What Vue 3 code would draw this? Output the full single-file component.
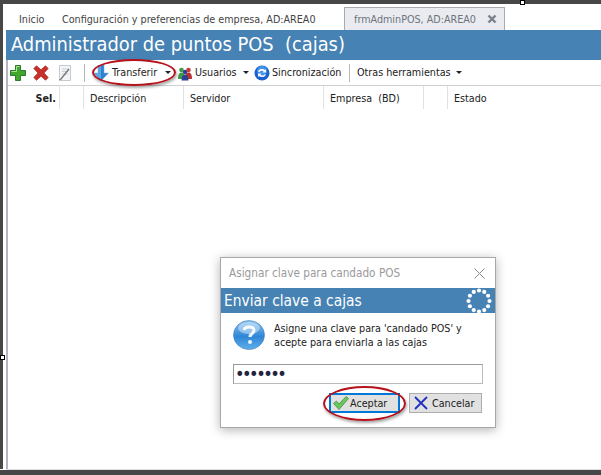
<template>
  <div class="screen">
    <div class="top-bar"><span class="handle handle-top"></span></div>
    <div class="middle">
      <div class="left-bar"><span class="handle handle-left"></span></div>
      <div class="work">
        <div class="tabs">
          <span class="tab tab-first">Inicio</span>
          <span class="tab tab-second">Configuración y preferencias de empresa, AD:AREA0</span>
          <span class="tab-active">
            <span>frmAdminPOS, AD:AREA0</span>
            <svg class="tab-close" viewBox="0 0 10 10"><path d="M1.500 1.500l7 7M8.500 1.500l-7 7" stroke="#7b7f88" stroke-width="2.400" fill="none"/></svg>
          </span>
        </div>
        <div class="band">Administrador de puntos POS&nbsp; (cajas)</div>
        <div class="toolbar">
          <svg class="ico plus" viewBox="0 0 16 16"><path d="M5.500 .5h5v5H15.500v5h-5v5h-5v-5H.5v-5h5z" fill="#43a62f" stroke="#2a7a2a"/><path d="M6.500 6.500V1.500h3M1.500 6.500h5" stroke="#a6e58e" fill="none"/></svg>
          <svg class="ico cross" viewBox="0 0 16 16"><path d="M.8 3.500L3.500 .8 8 4.800 12.500 .8l2.700 2.700L11 8l4.200 4.500-2.700 2.700L8 11.200 3.500 15.200.8 12.500 5 8z" fill="#c9302a" stroke="#a3241f" stroke-width=".7"/></svg>
          <svg class="ico note" viewBox="0 0 16 16"><path d="M2.500 .5h11v15h-11z" fill="#f2f4f6" stroke="#c6cbd1"/><path d="M5 4h6M5 6.500h6M5 9h6" stroke="#c9ced6"/><path d="M12 4L4 14l-1.500 1" stroke="#777" stroke-width="1.400" fill="none"/></svg>
          <span class="sep sep-a"></span>
          <svg class="ico arrow" viewBox="0 0 16 16"><path d="M5 0h6v8h4.500L8 16 .5 8H5z" fill="#2f82cf" stroke="#7eaed6" stroke-width=".5"/><path d="M5 0h3v16L.5 8H5z" fill="#5aa5e4"/></svg>
          <span class="tool t-transfer">Transferir</span>
          <span class="caret c-transfer"></span>
          <svg class="ico users" viewBox="0 0 16 16"><circle cx="4.500" cy="5" r="2.300" fill="#3d9a45"/><path d="M1 14c0-5 1.500-6.500 3.500-6.500S8 9 8 14z" fill="#3d9a45"/><circle cx="11.500" cy="5" r="2.300" fill="#c43c3c"/><path d="M8 14c0-5 1.500-6.500 3.500-6.500S15 9 15 14z" fill="#b8322f"/><circle cx="8" cy="7" r="2.200" fill="#2f3f8f"/><path d="M4.500 15.500c0-4 1.500-6 3.500-6s3.500 2 3.500 6z" fill="#2b3f96"/></svg>
          <span class="tool t-users">Usuarios</span>
          <span class="caret c-users"></span>
          <svg class="ico sync" viewBox="0 0 16 16"><circle cx="8" cy="8" r="7.500" fill="#1c62cf"/><circle cx="8" cy="6" r="5" fill="#3f93ea"/><path d="M4 6.500a4 3 0 0 1 7-1.500l1-1v3.500H8.500l1.200-1.200A2.500 2 0 0 0 5.500 7zM12 9.500a4 3 0 0 1-7 1.500l-1 1V8.500h3.500l-1.200 1.200a2.500 2 0 0 0 4.200-.2z" fill="#fff"/></svg>
          <span class="tool t-sync">Sincronización</span>
          <span class="sep sep-b"></span>
          <span class="tool t-other">Otras herramientas</span>
          <span class="caret c-other"></span>
        </div>
        <div class="grid-head">
          <span class="col col-sel">Sel.</span>
          <span class="col col-blank"></span>
          <span class="col col-desc">Descripción</span>
          <span class="col col-serv">Servidor</span>
          <span class="col col-emp">Empresa&nbsp; (BD)</span>
          <span class="col col-blank2"></span>
          <span class="col col-state">Estado</span>
        </div>
      </div>
    </div>
    <div class="bottom-gap"></div>
    <div class="bottom-bar"></div>

    <div class="dialog">
      <div class="dlg-title">
        <span>Asignar clave para candado POS</span>
        <svg class="dlg-close" viewBox="0 0 11 11"><path d="M.5.500l10 10M10.500.500l-10 10" stroke="#8a8a8a" fill="none"/></svg>
      </div>
      <div class="dlg-band">
        <span>Enviar clave a cajas</span>
        <svg class="spinner" viewBox="0 0 26 26">
          <circle v-for="d in dots" :key="d.x + '-' + d.y" :cx="d.x" :cy="d.y" r="2.100" fill="#fff" />
        </svg>
      </div>
      <div class="dlg-msg">
        <svg class="question" viewBox="0 0 32 30">
          <defs>
            <linearGradient id="qg" x1="0" y1="0" x2="0" y2="1"><stop offset="0" stop-color="#8fc4ee"/><stop offset=".55" stop-color="#2f86d6"/><stop offset="1" stop-color="#5fb0ea"/></linearGradient>
          </defs>
          <ellipse cx="16" cy="15" rx="15.500" ry="14.500" fill="url(#qg)" stroke="#3f7fbc" stroke-width=".6"/>
          <ellipse cx="16" cy="8" rx="11" ry="6" fill="#cfe6f8" opacity=".55"/>
          <path d="M11 10c1-4 10-4 10 .5 0 3-4 3-4 6.500" stroke="#fff" stroke-width="3" fill="none" opacity=".9"/>
          <circle cx="17" cy="22" r="2" fill="#fff" opacity=".9"/>
        </svg>
        <p>Asigne una clave para 'candado POS' y<br>acepte para enviarla a las cajas</p>
      </div>
      <div class="dlg-input">•••••••</div>
      <div class="dlg-buttons">
        <span class="btn btn-ok">
          <svg class="btn-ico" viewBox="0 0 16 14"><path d="M.5 7.500l3-2.500 2.500 3L13 .5l2.500 2L6 13.500z" fill="#66c95a" stroke="#4c8a4a" stroke-width=".8"/></svg>
          Aceptar
        </span>
        <span class="btn btn-cancel">
          <svg class="btn-ico-x" viewBox="0 0 14 14"><path d="M1 1l12 12M13 1L1 13" stroke="#2230c0" stroke-width="1.800" fill="none"/></svg>
          Cancelar
        </span>
      </div>
    </div>

    <span class="ring ring-tool"></span>
    <span class="ring ring-ok"></span>
  </div>
</template>

<script setup>
const dots = Array.from({ length: 12 }, (_, i) => {
  const a = (i / 12) * Math.PI * 2
  return { x: +(13 + 10.500 * Math.cos(a)).toFixed(2), y: +(13 + 10.500 * Math.sin(a)).toFixed(2) }
})
</script>

<style>
html, body { margin: 0; background: #fff; }
</style>

<style scoped>
.screen {
  position: relative;
  width: 601px;
  height: 475px;
  overflow: hidden;
  display: flex;
  flex-direction: column;
  background: #fff;
  font-family: "DejaVu Sans Condensed", "Noto Sans", sans-serif;
  font-size: 10.700px;
  color: #222;
}
.top-bar { height: 4px; background: #474747; flex: none; position: relative; }
.handle { position: absolute; width: 5px; height: 5px; background: #fff; border: 1px solid #000; box-sizing: border-box; }
.handle-top { left: 520px; top: 0; }
.handle-left { left: 0; top: 351px; }
.middle { flex: 1; display: flex; min-height: 0; }
.left-bar { width: 3px; background: #474747; flex: none; position: relative; margin-right: 3px; }
.work { flex: 1; display: flex; flex-direction: column; border-left: 2px solid #b4b4c4; min-width: 0; }
.tabs { height: 26px; display: flex; align-items: flex-end; flex: none; margin-left: -2px; background: #fff; }
.tab { color: #444; height: 23px; line-height: 25px; flex: none; }
.tab-first { margin-left: 13px; width: 43px; }
.tab-second { width: 282px; }
.tab-active {
  width: 161px; height: 23px; box-sizing: border-box;
  background: #e9ebf1; border: 1px solid #a9aab2; border-bottom: none;
  display: flex; align-items: center; justify-content: space-between;
  padding: 0 7px 0 9px; color: #6f737b;
}
.tab-close { width: 10px; height: 10px; }
.band {
  height: 30px; line-height: 30px; flex: none; margin-left: -2px;
  background: #4682b4; color: #fff; font-size: 19.850px; padding-left: 5px; white-space: nowrap;
}
.toolbar { height: 25px; flex: none; display: flex; align-items: center; border-bottom: 1px solid #d0d0d0; background: #fff; white-space: nowrap; }
.ico { width: 16px; height: 16px; flex: none; }
.plus { margin-left: 2px; }
.cross { margin-left: 7px; }
.note { margin-left: 8px; }
.sep { width: 1px; height: 18px; background: #b8b8b8; flex: none; }
.sep-a { margin-left: 11px; }
.arrow { margin-left: 8px; }
.t-transfer { margin-left: 3px; width: 47px; }
.caret { width: 0; height: 0; border: 3px solid transparent; border-top: 3px solid #222; border-bottom: none; flex: none; }
.c-transfer { margin-left: 6px; }
.users { margin-left: 6px; }
.t-users { margin-left: 2px; width: 41px; }
.c-users { margin-left: 7px; }
.sync { margin-left: 5px; }
.t-sync { margin-left: 2px; width: 67px; }
.sep-b { margin-left: 10px; }
.t-other { margin-left: 7px; width: 92px; }
.c-other { margin-left: 7px; }
.grid-head { height: 23px; flex: none; display: flex; }
.col { height: 23px; line-height: 25px; box-sizing: border-box; border-right: 1px solid #e2e2e2; padding-left: 6px; flex: none; }
.col-sel { width: 52px; padding-left: 0; padding-right: 3px; text-align: right; font-weight: 700; }
.col-blank { width: 24px; }
.col-desc { width: 100px; }
.col-serv { width: 140px; }
.col-emp { width: 100px; }
.col-blank2 { width: 24px; }
.col-state { border-right: none; }
.bottom-gap { height: 1px; flex: none; background: #ddd; margin-left: 6px; }
.bottom-bar { height: 5px; background: #474747; flex: none; }

.dialog {
  position: absolute; left: 220px; top: 257px; width: 276px; height: 171px; box-sizing: border-box;
  background: #fff; border: 1px solid #a8a8a8; box-shadow: 0 2px 10px rgba(0,0,0,.3);
  display: flex; flex-direction: column;
}
.dlg-title { height: 30px; flex: none; display: flex; align-items: center; justify-content: space-between; padding: 0 10px 0 8px; color: #9a9a9a; font-size: 11.700px; }
.dlg-close { width: 11px; height: 11px; }
.dlg-band {
  height: 25px; flex: none; background: #4682b4; color: #fff; font-size: 15.400px;
  display: flex; align-items: center; justify-content: space-between; padding: 0 3px;
}
.spinner { width: 26px; height: 26px; }
.dlg-msg { display: flex; align-items: flex-start; height: 51px; flex: none; padding-left: 12px; padding-top: 7px; box-sizing: border-box; color: #222; }
.question { width: 32px; height: 30px; flex: none; }
.dlg-msg p { margin: 0 0 0 9px; line-height: 14px; padding-top: 2px; }
.dlg-input {
  margin-left: 12px; width: 250px; height: 20px; box-sizing: border-box; flex: none;
  border: 1px solid #bbb; border-top-color: #999; border-left-color: #999;
  padding-left: 1px; line-height: 17px; font-size: 18px; color: #24243f; letter-spacing: -2.500px; overflow: hidden;
}
.dlg-buttons { display: flex; margin-top: 9px; padding-left: 108px; gap: 9px; }
.btn { height: 20px; box-sizing: border-box; display: flex; align-items: center; background: #e1e1e1; flex: none; }
.btn-ok { width: 71px; border: 2px solid #0078d7; padding-left: 2px; gap: 1px; }
.btn-cancel { width: 73px; border: 1px solid #adadad; padding-left: 4px; gap: 4px; }
.btn-ico { width: 16px; height: 14px; }
.btn-ico-x { width: 14px; height: 14px; }
.ring { position: absolute; box-sizing: border-box; border: 2px solid #b5121b; border-radius: 50%; box-shadow: 1px 2px 3px rgba(0,0,0,.35); }
.ring-tool { left: 92px; top: 59px; width: 84px; height: 27px; }
.ring-ok { left: 323px; top: 386px; width: 83px; height: 35px; }
</style>
